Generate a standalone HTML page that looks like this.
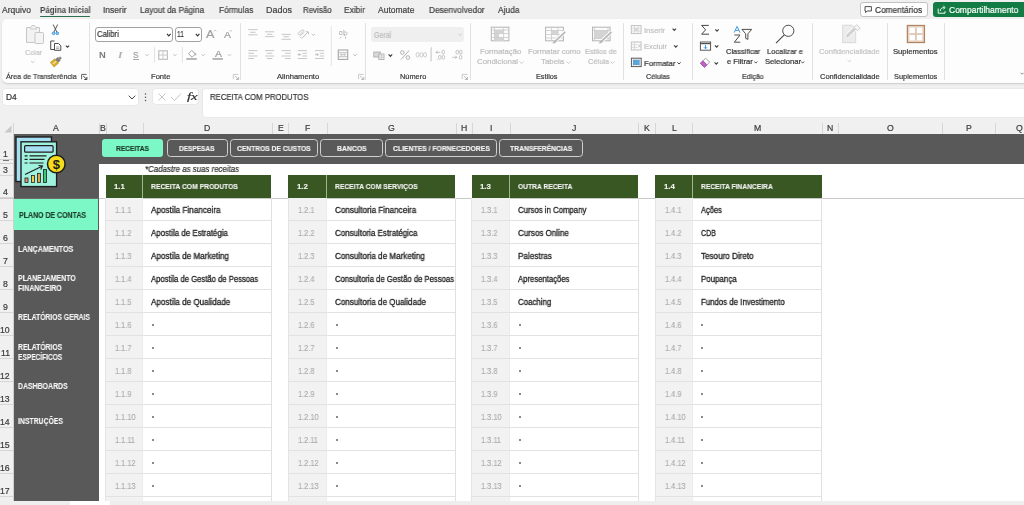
<!DOCTYPE html><html><head><meta charset='utf-8'><style>
html,body{margin:0;padding:0;}
body{width:1024px;height:505px;overflow:hidden;position:relative;background:#f0f0f0;font-family:"Liberation Sans", sans-serif;}
.a{position:absolute;box-sizing:border-box;}
.t{position:absolute;white-space:nowrap;line-height:1;transform-origin:0 0;-webkit-text-stroke:0.2px currentColor;will-change:transform;}
.t[style*='bold']{-webkit-text-stroke:0;}

#t0{transform:scaleX(1.0018)}
#t1{transform:scaleX(1.0024)}
#t2{transform:scaleX(0.9696)}
#t3{transform:scaleX(0.9667)}
#t4{transform:scaleX(1.0545)}
#t5{transform:scaleX(0.9321)}
#t6{transform:scaleX(0.9813)}
#t7{transform:scaleX(0.9997)}
#t8{transform:scaleX(0.9800)}
#t9{transform:scaleX(0.9872)}
#t10{transform:scaleX(0.9320)}
#t11{transform:scaleX(0.9767)}
#t12{transform:scaleX(0.9975)}
#t13{transform:scaleX(0.9830)}
#t14{transform:scaleX(1.0394)}
#t15{transform:scaleX(1.0402)}
#t16{transform:scaleX(1.0130)}
#t17{transform:scaleX(0.9992)}
#t18{transform:scaleX(0.9764)}
#t19{transform:scaleX(0.9711)}
#t20{transform:scaleX(1.0273)}
#t21{transform:scaleX(1.0164)}
#t22{transform:scaleX(0.9460)}
#t23{transform:scaleX(0.9055)}
#t24{transform:scaleX(0.7977)}
#t25{transform:scaleX(1.1259)}
#t26{transform:scaleX(1.1519)}
#t27{transform:scaleX(1.0381)}
#t28{transform:scaleX(1.4035)}
#t29{transform:scaleX(0.9512)}
#t30{transform:scaleX(1.1797)}
#t31{transform:scaleX(0.8202)}
#t32{transform:scaleX(1.0195)}
#t33{transform:scaleX(1.0363)}
#t34{transform:scaleX(1.0221)}
#t35{transform:scaleX(1.0329)}
#t36{transform:scaleX(0.9682)}
#t37{transform:scaleX(0.9798)}
#t38{transform:scaleX(0.9951)}
#t39{transform:scaleX(1.0095)}
#t40{transform:scaleX(0.9713)}
#t41{transform:scaleX(0.9855)}
#t42{transform:scaleX(1.0112)}
#t43{transform:scaleX(0.9799)}
#t44{transform:scaleX(1.0062)}
#t45{transform:scaleX(1.0072)}
#t46{transform:scaleX(1.0064)}
#t47{transform:scaleX(0.9953)}
#t48{transform:scaleX(1.5575)}
#t49{transform:scaleX(0.9222)}
#t50{left:53.43px !important}
#t51{left:99.68px !important}
#t52{left:121.31px !important}
#t53{left:204.46px !important}
#t54{left:277.65px !important}
#t55{left:305.19px !important}
#t56{left:388.02px !important}
#t57{left:460.76px !important}
#t58{left:489.74px !important}
#t59{left:572.23px !important}
#t60{left:644.40px !important}
#t61{left:671.78px !important}
#t62{left:753.82px !important}
#t63{left:827.41px !important}
#t64{left:887.12px !important}
#t65{left:965.70px !important}
#t66{left:1015.82px !important}
#t67{left:2.78px !important}
#t68{left:2.78px !important}
#t69{left:2.78px !important}
#t70{left:2.78px !important}
#t71{left:2.78px !important}
#t72{left:2.78px !important}
#t73{left:2.78px !important}
#t74{left:2.78px !important}
#t75{left:0.36px !important}
#t76{left:0.68px !important}
#t77{left:0.36px !important}
#t78{left:0.36px !important}
#t79{left:0.36px !important}
#t80{left:0.36px !important}
#t81{left:0.36px !important}
#t82{left:0.36px !important}
#t83{transform:scaleX(0.8538)}
#t84{transform:scaleX(0.8700)}
#t85{transform:scaleX(0.8539)}
#t86{transform:scaleX(0.8569)}
#t87{transform:scaleX(0.8295)}
#t88{transform:scaleX(0.8336)}
#t89{transform:scaleX(0.8032)}
#t90{transform:scaleX(0.8461)}
#t91{transform:scaleX(0.8372)}
#t92{transform:scaleX(0.9593)}
#t93{transform:scaleX(0.9438)}
#t94{transform:scaleX(0.9742)}
#t95{transform:scaleX(0.9890)}
#t96{transform:scaleX(0.9881)}
#t97{transform:scaleX(0.9792)}
#t98{transform:scaleX(0.9267)}
#t99{transform:scaleX(1.0470)}
#t100{transform:scaleX(0.9045)}
#t101{transform:scaleX(0.9000)}
#t102{transform:scaleX(0.9516)}
#t103{transform:scaleX(0.9000)}
#t104{transform:scaleX(0.9201)}
#t105{transform:scaleX(0.9000)}
#t106{transform:scaleX(0.9444)}
#t107{transform:scaleX(0.9000)}
#t108{transform:scaleX(0.8940)}
#t109{transform:scaleX(0.9000)}
#t110{transform:scaleX(0.9424)}
#t111{transform:scaleX(0.9000)}
#t112{transform:scaleX(0.9000)}
#t113{transform:scaleX(0.9000)}
#t114{transform:scaleX(0.9000)}
#t115{transform:scaleX(0.9000)}
#t116{transform:scaleX(0.9000)}
#t117{transform:scaleX(0.9000)}
#t118{transform:scaleX(0.9000)}
#t119{transform:scaleX(1.0470)}
#t120{transform:scaleX(0.8962)}
#t121{transform:scaleX(0.9000)}
#t122{transform:scaleX(0.9449)}
#t123{transform:scaleX(0.9000)}
#t124{transform:scaleX(0.9277)}
#t125{transform:scaleX(0.9000)}
#t126{transform:scaleX(0.9403)}
#t127{transform:scaleX(0.9000)}
#t128{transform:scaleX(0.8961)}
#t129{transform:scaleX(0.9000)}
#t130{transform:scaleX(0.9377)}
#t131{transform:scaleX(0.9000)}
#t132{transform:scaleX(0.9000)}
#t133{transform:scaleX(0.9000)}
#t134{transform:scaleX(0.9000)}
#t135{transform:scaleX(0.9000)}
#t136{transform:scaleX(0.9000)}
#t137{transform:scaleX(0.9000)}
#t138{transform:scaleX(0.9000)}
#t139{transform:scaleX(1.0470)}
#t140{transform:scaleX(0.8922)}
#t141{transform:scaleX(0.9000)}
#t142{transform:scaleX(0.9053)}
#t143{transform:scaleX(0.9000)}
#t144{transform:scaleX(0.9318)}
#t145{transform:scaleX(0.9000)}
#t146{transform:scaleX(0.9448)}
#t147{transform:scaleX(0.9000)}
#t148{transform:scaleX(0.8969)}
#t149{transform:scaleX(0.9000)}
#t150{transform:scaleX(0.9179)}
#t151{transform:scaleX(0.9000)}
#t152{transform:scaleX(0.9000)}
#t153{transform:scaleX(0.9000)}
#t154{transform:scaleX(0.9000)}
#t155{transform:scaleX(0.9000)}
#t156{transform:scaleX(0.9000)}
#t157{transform:scaleX(0.9000)}
#t158{transform:scaleX(0.9000)}
#t159{transform:scaleX(1.0470)}
#t160{transform:scaleX(0.8926)}
#t161{transform:scaleX(0.9000)}
#t162{transform:scaleX(0.8749)}
#t163{transform:scaleX(0.9000)}
#t164{transform:scaleX(0.8129)}
#t165{transform:scaleX(0.9000)}
#t166{transform:scaleX(0.9402)}
#t167{transform:scaleX(0.9000)}
#t168{transform:scaleX(0.9203)}
#t169{transform:scaleX(0.9000)}
#t170{transform:scaleX(0.9127)}
#t171{transform:scaleX(0.9000)}
#t172{transform:scaleX(0.9000)}
#t173{transform:scaleX(0.9000)}
#t174{transform:scaleX(0.9000)}
#t175{transform:scaleX(0.9000)}
#t176{transform:scaleX(0.9000)}
#t177{transform:scaleX(0.9000)}
#t178{transform:scaleX(0.9000)}</style></head><body>
<span id="t0" class="t" style="left:2.00px;top:6px;font-size:8.50px;color:#424242;font-weight:normal;">Arquivo</span>
<span id="t1" class="t" style="left:102.70px;top:6px;font-size:8.50px;color:#424242;font-weight:normal;">Inserir</span>
<span id="t2" class="t" style="left:139.80px;top:6px;font-size:8.50px;color:#424242;font-weight:normal;">Layout da Página</span>
<span id="t3" class="t" style="left:218.50px;top:6px;font-size:8.50px;color:#424242;font-weight:normal;">Fórmulas</span>
<span id="t4" class="t" style="left:265.80px;top:6px;font-size:8.50px;color:#424242;font-weight:normal;">Dados</span>
<span id="t5" class="t" style="left:302.50px;top:6px;font-size:8.50px;color:#424242;font-weight:normal;">Revisão</span>
<span id="t6" class="t" style="left:344.00px;top:6px;font-size:8.50px;color:#424242;font-weight:normal;">Exibir</span>
<span id="t7" class="t" style="left:378.10px;top:6px;font-size:8.50px;color:#424242;font-weight:normal;">Automate</span>
<span id="t8" class="t" style="left:429.00px;top:6px;font-size:8.50px;color:#424242;font-weight:normal;">Desenvolvedor</span>
<span id="t9" class="t" style="left:498.00px;top:6px;font-size:8.50px;color:#424242;font-weight:normal;">Ajuda</span>
<span id="t10" class="t" style="left:40.00px;top:6px;font-size:8.50px;color:#454545;font-weight:bold;">Página Inicial</span>
<div class="a" style="left:39.80px;top:16.20px;width:50.50px;height:1.30px;background:#2a6f4e;border-radius:1px;"></div>
<div class="a" style="left:859.60px;top:2.00px;width:68.00px;height:15.30px;background:#fff;border:1px solid #c2c2c2;border-radius:3px;"></div>
<svg class="a" style="left:856px;top:0px" width="100" height="20" viewBox="856 0 100 20"><path d="M865 6.6h6.4v4.4h-4.2l-1.6 1.6v-1.6h-.6z" fill="none" stroke="#444" stroke-width="0.95"/></svg>
<span id="t11" class="t" style="left:875.00px;top:6px;font-size:8.50px;color:#333;font-weight:normal;">Comentários</span>
<div class="a" style="left:933.20px;top:2.00px;width:100.00px;height:15.30px;background:#137b44;border-radius:3px;"></div>
<svg class="a" style="left:930px;top:0px" width="20" height="20" viewBox="930 0 20 20"><path d="M938.2 8.6v4.6h6.8v-2" fill="none" stroke="#fff" stroke-width="0.95"/><path d="M940.2 11c.2-2.4 1.8-3.4 4-3.4M943.4 6l1.8 1.6-1.8 1.6" fill="none" stroke="#fff" stroke-width="0.95"/></svg>
<span id="t12" class="t" style="left:948.60px;top:6px;font-size:8.50px;color:#fff;font-weight:normal;">Compartilhamento</span>
<div class="a" style="left:2.00px;top:19.00px;width:1040.00px;height:64.00px;background:#fdfdfd;border-radius:5px;box-shadow:0 1px 1.5px rgba(0,0,0,0.16);"></div>
<div class="a" style="left:88.70px;top:23.00px;width:1.00px;height:57.00px;background:#e1e1e1;"></div>
<div class="a" style="left:239.60px;top:23.00px;width:1.00px;height:57.00px;background:#e1e1e1;"></div>
<div class="a" style="left:365.30px;top:23.00px;width:1.00px;height:57.00px;background:#e1e1e1;"></div>
<div class="a" style="left:469.60px;top:23.00px;width:1.00px;height:57.00px;background:#e1e1e1;"></div>
<div class="a" style="left:622.80px;top:23.00px;width:1.00px;height:57.00px;background:#e1e1e1;"></div>
<div class="a" style="left:692.00px;top:23.00px;width:1.00px;height:57.00px;background:#e1e1e1;"></div>
<div class="a" style="left:812.20px;top:23.00px;width:1.00px;height:57.00px;background:#e1e1e1;"></div>
<div class="a" style="left:887.20px;top:23.00px;width:1.00px;height:57.00px;background:#e1e1e1;"></div>
<div class="a" style="left:944.20px;top:23.00px;width:1.00px;height:57.00px;background:#e1e1e1;"></div>
<div class="a" style="left:431.00px;top:47.00px;width:1.00px;height:14.00px;background:#dadada;"></div>
<span id="t13" class="t" style="left:6.20px;top:73px;font-size:7.30px;color:#3a3a3a;font-weight:normal;">Área de Transferência</span>
<span id="t14" class="t" style="left:150.50px;top:73px;font-size:7.30px;color:#3a3a3a;font-weight:normal;">Fonte</span>
<span id="t15" class="t" style="left:276.80px;top:73px;font-size:7.30px;color:#3a3a3a;font-weight:normal;">Alinhamento</span>
<span id="t16" class="t" style="left:399.50px;top:73px;font-size:7.30px;color:#3a3a3a;font-weight:normal;">Número</span>
<span id="t17" class="t" style="left:536.00px;top:73px;font-size:7.30px;color:#3a3a3a;font-weight:normal;">Estilos</span>
<span id="t18" class="t" style="left:645.80px;top:73px;font-size:7.30px;color:#3a3a3a;font-weight:normal;">Células</span>
<span id="t19" class="t" style="left:741.90px;top:73px;font-size:7.30px;color:#3a3a3a;font-weight:normal;">Edição</span>
<span id="t20" class="t" style="left:820.00px;top:73px;font-size:7.30px;color:#3a3a3a;font-weight:normal;">Confidencialidade</span>
<span id="t21" class="t" style="left:894.30px;top:73px;font-size:7.30px;color:#3a3a3a;font-weight:normal;">Suplementos</span>
<svg class="a" style="left:0px;top:68px" width="480" height="16" viewBox="0 68 480 16"><path d="M81.6 79.2v-4.8h5" fill="none" stroke="#606060" stroke-width="1"/><path d="M83.2 76l3.6 3.4M84.3 79.5h2.6v-2.6" fill="none" stroke="#444" stroke-width="1"/><path d="M233.3 79.2v-4.8h5" fill="none" stroke="#c4c4c4" stroke-width="0.9"/><path d="M234.9 76l3.6 3.4M236.0 79.5h2.6v-2.6" fill="none" stroke="#b0b0b0" stroke-width="0.9"/><path d="M358.6 79.2v-4.8h5" fill="none" stroke="#c4c4c4" stroke-width="0.9"/><path d="M360.20000000000005 76l3.6 3.4M361.3 79.5h2.6v-2.6" fill="none" stroke="#b0b0b0" stroke-width="0.9"/><path d="M462.2 79.2v-4.8h5" fill="none" stroke="#c4c4c4" stroke-width="0.9"/><path d="M463.8 76l3.6 3.4M464.9 79.5h2.6v-2.6" fill="none" stroke="#b0b0b0" stroke-width="0.9"/></svg>
<svg class="a" style="left:20px;top:20px" width="60" height="50" viewBox="20 20 60 50">
<path d="M26.5 27.5h4l1.5-2h2.5l1.5 2h3.5v15h-13z" fill="#f2f2f2" stroke="#c6c6c6" stroke-width="1"/>
<path d="M30.5 27.5v1.5h6v-1.5" fill="none" stroke="#c6c6c6" stroke-width="0.9"/>
<rect x="35" y="32.5" width="8.5" height="11" rx="0.8" fill="#f4f4f4" stroke="#c6c6c6" stroke-width="1"/>
<path d="M31 61l1.7 1.5 1.7-1.5" fill="none" stroke="#c2c2c2" stroke-width="0.9"/>
<path d="M53.2 24.5l3.6 7.5M57.6 24.5l-3.6 7.5" stroke="#4a4a4a" stroke-width="0.9"/>
<circle cx="53.6" cy="33.3" r="1.3" fill="#9cc9ee" stroke="#3a96dd" stroke-width="1"/>
<circle cx="57.3" cy="33.3" r="1.3" fill="#9cc9ee" stroke="#3a96dd" stroke-width="1"/>
<path d="M54.5 41h-3.8v8.5h3.8" fill="none" stroke="#444" stroke-width="0.95"/>
<path d="M54.5 43.5h4l2.3 2.3v4.5h-6.3z" fill="#fff" stroke="#444" stroke-width="0.95"/>
<path d="M56 47h3.2M56 48.6h3.2" stroke="#999" stroke-width="0.8"/>
<path d="M65.8 45.6l1.7 1.6 1.7-1.6" fill="none" stroke="#444" stroke-width="1.1"/>
<g transform="rotate(-40 56 61.5)"><rect x="56.6" y="59.3" width="3.8" height="4.4" rx="0.6" fill="#808080"/><rect x="60" y="60.2" width="2.6" height="2.6" rx="0.6" fill="#8c8c8c"/>
<path d="M51 58.6h5.8v5.8h-5.8z" fill="#dcae2a" stroke="#a88420" stroke-width="0.5"/><path d="M51.8 61.5h4.6" stroke="#f6e6b8" stroke-width="1.1"/></g>
</svg>
<span id="t22" class="t" style="left:25.00px;top:49px;font-size:7.60px;color:#c4c4c4;font-weight:normal;">Colar</span>
<div class="a" style="left:94.60px;top:27.00px;width:78.10px;height:15.20px;background:#fff;border:1px solid #a2a2a2;border-radius:3px;"></div>
<span id="t23" class="t" style="left:96.80px;top:30px;font-size:8.50px;color:#333;font-weight:normal;">Calibri</span>
<div class="a" style="left:174.70px;top:27.00px;width:26.90px;height:15.20px;background:#fff;border:1px solid #a2a2a2;border-radius:3px;"></div>
<span id="t24" class="t" style="left:176.80px;top:30px;font-size:8.50px;color:#333;font-weight:normal;">11</span>
<svg class="a" style="left:88px;top:20px" width="160" height="50" viewBox="88 20 160 50"><path d="M167.00 33.95L168.80 35.85L170.60 33.95" fill="none" stroke="#333" stroke-width="1.15"/><path d="M195.80 33.95L197.60 35.85L199.40 33.95" fill="none" stroke="#333" stroke-width="1.15"/><path d="M214 31.3l1.1-1.2 1.1 1.2" fill="none" stroke="#a8a8a8" stroke-width="0.7"/><path d="M229.6 30.2l1.1 1.2 1.1-1.2" fill="none" stroke="#a8a8a8" stroke-width="0.7"/><path d="M154.5 47.2v15.3M182.4 47.2v15.3" stroke="#dedede" stroke-width="0.9"/><path d="M145.40 54.20L147.00 55.80L148.60 54.20" fill="none" stroke="#b8b8b8" stroke-width="0.9"/><path d="M173.30 54.20L174.90 55.80L176.50 54.20" fill="none" stroke="#b8b8b8" stroke-width="0.9"/><path d="M201.60 54.20L203.20 55.80L204.80 54.20" fill="none" stroke="#b8b8b8" stroke-width="0.9"/><path d="M227.90 54.20L229.50 55.80L231.10 54.20" fill="none" stroke="#b8b8b8" stroke-width="0.9"/><rect x="158.8" y="50.8" width="8.5" height="8.5" fill="none" stroke="#b4b4b4" stroke-width="1"/><path d="M163 50.8v8.5M158.8 55h8.5" stroke="#c4c4c4" stroke-width="0.9"/><path d="M188.5 53.8l3.2-3.4 3.6 3.6-3.2 3.2z" fill="#fff" stroke="#9a9a9a" stroke-width="0.9"/><path d="M194.8 52.5c1 .8 1.2 2 .9 3" fill="none" stroke="#9a9a9a" stroke-width="0.8"/><rect x="186.3" y="58" width="10.5" height="1.9" fill="#b4b4b4"/><rect x="212.5" y="58" width="10.4" height="1.9" fill="#b4b4b4"/></svg>
<span id="t25" class="t" style="left:205.90px;top:29px;font-size:11.20px;color:#a0a0a0;font-weight:normal;">A</span>
<span id="t26" class="t" style="left:223.80px;top:31px;font-size:9.00px;color:#a0a0a0;font-weight:normal;">A</span>
<span id="t27" class="t" style="left:99.00px;top:51px;font-size:9.00px;color:#7a7a7a;font-weight:bold;">N</span>
<span id="t28" class="t" style="left:118.30px;top:51px;font-size:9.00px;color:#a8a8a8;font-weight:normal;font-style:italic;font-family:'Liberation Serif';">I</span>
<span id="t29" class="t" style="left:133.40px;top:51px;font-size:8.60px;color:#a0a0a0;font-weight:normal;">S</span>
<div class="a" style="left:132.80px;top:58.60px;width:5.80px;height:0.90px;background:#a8a8a8;"></div>
<span id="t30" class="t" style="left:214.60px;top:50px;font-size:8.80px;color:#9a9a9a;font-weight:normal;">A</span>
<svg class="a" style="left:240px;top:20px" width="130" height="50" viewBox="240 20 130 50"><path d="M248.30 29.60H257.50" stroke="#bdbdbd" stroke-width="0.85"/><path d="M250.20 32.30H255.60" stroke="#bdbdbd" stroke-width="0.85"/><path d="M248.30 34.80H257.50" stroke="#bdbdbd" stroke-width="0.85"/><path d="M265.00 31.80H274.20" stroke="#bdbdbd" stroke-width="0.85"/><path d="M266.90 34.30H272.30" stroke="#bdbdbd" stroke-width="0.85"/><path d="M265.00 36.60H274.20" stroke="#bdbdbd" stroke-width="0.85"/><path d="M281.60 34.40H290.80" stroke="#bdbdbd" stroke-width="0.85"/><path d="M283.50 36.70H288.90" stroke="#bdbdbd" stroke-width="0.85"/><path d="M281.60 39.30H290.80" stroke="#bdbdbd" stroke-width="0.85"/><path d="M248.30 50.60H257.50" stroke="#bdbdbd" stroke-width="0.85"/><path d="M248.30 53.30H254.00" stroke="#bdbdbd" stroke-width="0.85"/><path d="M248.30 56.00H257.50" stroke="#bdbdbd" stroke-width="0.85"/><path d="M248.30 58.50H254.00" stroke="#bdbdbd" stroke-width="0.85"/><path d="M265.00 50.60H274.20" stroke="#bdbdbd" stroke-width="0.85"/><path d="M266.80 53.30H272.40" stroke="#bdbdbd" stroke-width="0.85"/><path d="M265.00 56.00H274.20" stroke="#bdbdbd" stroke-width="0.85"/><path d="M266.80 58.50H272.40" stroke="#bdbdbd" stroke-width="0.85"/><path d="M281.60 50.60H290.80" stroke="#bdbdbd" stroke-width="0.85"/><path d="M285.10 53.30H290.80" stroke="#bdbdbd" stroke-width="0.85"/><path d="M281.60 56.00H290.80" stroke="#bdbdbd" stroke-width="0.85"/><path d="M285.10 58.50H290.80" stroke="#bdbdbd" stroke-width="0.85"/><path d="M297.80 50.60H307.00" stroke="#bdbdbd" stroke-width="0.85"/><path d="M302.50 53.30H307.00" stroke="#bdbdbd" stroke-width="0.85"/><path d="M302.50 56.00H307.00" stroke="#bdbdbd" stroke-width="0.85"/><path d="M297.80 58.50H307.00" stroke="#bdbdbd" stroke-width="0.85"/><path d="M301.3 54.6h-3M299.6 53.2l-1.4 1.4 1.4 1.4" fill="none" stroke="#b0b0b0" stroke-width="0.8"/><path d="M315.00 50.60H324.20" stroke="#bdbdbd" stroke-width="0.85"/><path d="M319.70 53.30H324.20" stroke="#bdbdbd" stroke-width="0.85"/><path d="M319.70 56.00H324.20" stroke="#bdbdbd" stroke-width="0.85"/><path d="M315.00 58.50H324.20" stroke="#bdbdbd" stroke-width="0.85"/><path d="M315 54.6h3.2M316.8 53.2l1.4 1.4-1.4 1.4" fill="none" stroke="#b0b0b0" stroke-width="0.8"/><path d="M301.5 38.6L308 32.1M306 31.6l2.3.3.2 2.3" fill="none" stroke="#b4b4b4" stroke-width="0.85"/><path d="M298 33.5l3.5-3.5 1.5 1.5-3.5 3.5zM300.5 35.8l3.5-3.5" fill="none" stroke="#b8b8b8" stroke-width="0.85"/><path d="M302.5 29.2l2.2 2.2M299.5 36.5l1.5 1.5" fill="none" stroke="#c0c0c0" stroke-width="0.8"/><path d="M311.70 33.75L313.40 35.45L315.10 33.75" fill="none" stroke="#b8b8b8" stroke-width="0.9"/><path d="M331.3 26v40" stroke="#e2e2e2" stroke-width="0.9"/><path d="M339.5 31.5h2.5v3h-2.5zM339.8 38.5l1.8-2M343.8 29.8v4.5M343.8 32h2.2c1.5 0 1.8 2.8 0 2.8h-2.5M345 33.6l-1.3 1.2 1.3 1.2M345.5 36.5v2.5" fill="none" stroke="#b8b8b8" stroke-width="0.85"/><rect x="338.3" y="50" width="9.4" height="9.4" fill="none" stroke="#a6a6a6" stroke-width="1.1"/><path d="M338.3 52.7h9.4M338.3 56.7h9.4M340.5 54.7h5M340.5 54.7l1-1M340.5 54.7l1 1M345.5 54.7l-1-1M345.5 54.7l-1 1" fill="none" stroke="#b0b0b0" stroke-width="0.8"/><path d="M353.20 54.15L355.00 55.85L356.80 54.15" fill="none" stroke="#b8b8b8" stroke-width="0.9"/></svg>
<div class="a" style="left:371.40px;top:27.00px;width:92.80px;height:14.80px;background:#efefef;border-radius:3px;"></div>
<span id="t31" class="t" style="left:373.50px;top:31px;font-size:8.50px;color:#bcbcbc;font-weight:normal;">Geral</span>
<svg class="a" style="left:368px;top:20px" width="100" height="50" viewBox="368 20 100 50"><path d="M458.60 33.80L460.20 35.40L461.80 33.80" fill="none" stroke="#c4c4c4" stroke-width="0.9"/><rect x="373.8" y="52" width="6.5" height="5" fill="#d8d8d8" stroke="#a8a8a8" stroke-width="0.8"/><rect x="378.8" y="54" width="5.2" height="5.6" fill="#fafafa" stroke="#a8a8a8" stroke-width="0.8"/><path d="M378.8 55.9h5.2M378.8 57.7h5.2M381.4 54v5.6" stroke="#b8b8b8" stroke-width="0.6"/><path d="M388.60 54.45L390.40 56.35L392.20 54.45" fill="none" stroke="#444" stroke-width="1.2"/><circle cx="402.3" cy="52.5" r="1.8" fill="none" stroke="#a6a6a6" stroke-width="0.9"/><circle cx="407.9" cy="57.5" r="1.8" fill="none" stroke="#a6a6a6" stroke-width="0.9"/><path d="M409.2 50.4L401 59.6" stroke="#a6a6a6" stroke-width="0.9"/><ellipse cx="417.6" cy="54.8" rx="1.5" ry="2.3" fill="none" stroke="#bdbdbd" stroke-width="0.75"/><ellipse cx="421.3" cy="54.8" rx="1.5" ry="2.3" fill="none" stroke="#bdbdbd" stroke-width="0.75"/><ellipse cx="425" cy="54.8" rx="1.5" ry="2.3" fill="none" stroke="#bdbdbd" stroke-width="0.75"/><path d="M430.6 48v14" stroke="#dedede" stroke-width="0.9"/><path d="M436 52.3h4.3M437.5 50.8l-1.5 1.5 1.5 1.5" fill="none" stroke="#b4b4b4" stroke-width="0.8"/><ellipse cx="443.2" cy="52.2" rx="1.3" ry="2" fill="none" stroke="#b4b4b4" stroke-width="0.75"/><ellipse cx="439.8" cy="57.3" rx="1.3" ry="2" fill="none" stroke="#b4b4b4" stroke-width="0.75"/><ellipse cx="443.4" cy="57.3" rx="1.3" ry="2" fill="none" stroke="#b4b4b4" stroke-width="0.75"/><path d="M437.3 59v.8" stroke="#b4b4b4" stroke-width="0.8"/><ellipse cx="457.2" cy="52.2" rx="1.3" ry="2" fill="none" stroke="#b4b4b4" stroke-width="0.75"/><ellipse cx="460.8" cy="52.2" rx="1.3" ry="2" fill="none" stroke="#b4b4b4" stroke-width="0.75"/><path d="M452.3 57.3h4.5M455.3 55.8l1.5 1.5-1.5 1.5" fill="none" stroke="#b4b4b4" stroke-width="0.8"/><ellipse cx="460.6" cy="57.3" rx="1.3" ry="2" fill="none" stroke="#b4b4b4" stroke-width="0.75"/></svg>
<svg class="a" style="left:486px;top:22px" width="130" height="26" viewBox="486 22 130 26"><rect x="491.3" y="27.2" width="17.6" height="13.6" fill="#fbfbfb" stroke="#b4b4b4" stroke-width="1"/><rect x="494.5" y="30" width="9" height="3.5" fill="#d4d4d4"/><rect x="494.5" y="33.5" width="4.5" height="4" fill="#d4d4d4"/><rect x="494.5" y="37.5" width="9" height="3.3" fill="#d4d4d4"/><path d="M494.5 27.2v13.6M503.6 27.2v13.6M491.3 30h17.6M491.3 33.5h17.6M491.3 37.5h17.6" stroke="#cacaca" stroke-width="0.8"/><rect x="545.6" y="27.2" width="17.8" height="13.6" fill="#fbfbfb" stroke="#b4b4b4" stroke-width="1"/><rect x="551.5" y="30.5" width="6.5" height="4" fill="#d4d4d4"/><path d="M551.5 27.2v13.6M558 27.2v13.6M545.6 30.5h17.8M545.6 34.5h17.8M545.6 38h17.8" stroke="#cacaca" stroke-width="0.8"/><path d="M565.2 31.8l-9.5 9" stroke="#fff" stroke-width="3.4"/><path d="M565.2 31.8l-9.5 9" stroke="#b8b8b8" stroke-width="1.8"/><path d="M555.8 40.6c-1.2 .2-2.5 1.4-3.6 2.6 1.8 .2 3.6-.4 4.4-1.8z" fill="#b0b0b0"/><rect x="592.5" y="27.2" width="17.6" height="13.6" fill="#fbfbfb" stroke="#b4b4b4" stroke-width="1"/><rect x="594.6" y="30.5" width="13.4" height="8" fill="#d4d4d4"/><path d="M594.6 27.2v13.6M608 27.2v13.6M592.5 30.5h17.6M592.5 38.5h17.6" stroke="#cacaca" stroke-width="0.8"/><path d="M611.5 31.8l-9.5 9" stroke="#fff" stroke-width="3.4"/><path d="M611.5 31.8l-9.5 9" stroke="#b8b8b8" stroke-width="1.8"/><path d="M602.1 40.6c-1.2 .2-2.5 1.4-3.6 2.6 1.8 .2 3.6-.4 4.4-1.8z" fill="#b0b0b0"/></svg>
<span id="t32" class="t" style="left:479.80px;top:48px;font-size:7.60px;color:#bdbdbd;font-weight:normal;">Formatação</span>
<span id="t33" class="t" style="left:476.70px;top:58px;font-size:7.60px;color:#bdbdbd;font-weight:normal;">Condicional</span>
<span id="t34" class="t" style="left:528.30px;top:48px;font-size:7.60px;color:#bdbdbd;font-weight:normal;">Formatar como</span>
<span id="t35" class="t" style="left:541.00px;top:58px;font-size:7.60px;color:#bdbdbd;font-weight:normal;">Tabela</span>
<span id="t36" class="t" style="left:585.30px;top:48px;font-size:7.60px;color:#bdbdbd;font-weight:normal;">Estilos de</span>
<span id="t37" class="t" style="left:587.50px;top:58px;font-size:7.60px;color:#bdbdbd;font-weight:normal;">Célula</span>
<svg class="a" style="left:518.5px;top:60.5px;" width="5" height="4" viewBox="0 0 5 4"><path d="M.5 .5l2 2 2-2" fill="none" stroke="#c0c0c0" stroke-width="0.8"/></svg>
<svg class="a" style="left:565.5px;top:60.5px;" width="5" height="4" viewBox="0 0 5 4"><path d="M.5 .5l2 2 2-2" fill="none" stroke="#c0c0c0" stroke-width="0.8"/></svg>
<svg class="a" style="left:610px;top:60.5px;" width="5" height="4" viewBox="0 0 5 4"><path d="M.5 .5l2 2 2-2" fill="none" stroke="#c0c0c0" stroke-width="0.8"/></svg>
<svg class="a" style="left:626px;top:22px" width="60" height="48" viewBox="626 22 60 48"><rect x="631.3" y="25.6" width="9.8" height="8" fill="#fafafa" stroke="#bdbdbd" stroke-width="0.9"/><path d="M631.3 28.3h9.8M631.3 31h9.8M634.5 25.6v8M638 25.6v8" stroke="#cfcfcf" stroke-width="0.7"/><rect x="634.5" y="28.3" width="3.5" height="2.7" fill="#d6d6d6"/><path d="M672.60 28.70L674.30 30.50L676.00 28.70" fill="none" stroke="#444" stroke-width="1.15"/><rect x="631.3" y="42" width="9.8" height="8" fill="#fafafa" stroke="#bdbdbd" stroke-width="0.9"/><path d="M631.3 44.7h6M631.3 47.4h6M634.5 42v8" stroke="#cfcfcf" stroke-width="0.7"/><path d="M638.2 44.6l2.6 2.6M640.8 44.6l-2.6 2.6" stroke="#b8b8b8" stroke-width="0.8"/><path d="M674.10 45.40L675.80 47.20L677.50 45.40" fill="none" stroke="#444" stroke-width="1.15"/><rect x="631.4" y="58.2" width="9.8" height="8.4" fill="#fff" stroke="#505050" stroke-width="0.95"/><rect x="633" y="59.8" width="6.6" height="5.2" fill="#58a6e0"/><path d="M633 58.2v8.4M639.6 58.2v8.4M631.4 59.8h9.8M631.4 65h9.8" stroke="#8a8a8a" stroke-width="0.5" stroke-dasharray="0.8 0.8"/><path d="M677.40 62.35L679.00 64.05L680.60 62.35" fill="none" stroke="#444" stroke-width="1.0"/></svg>
<span id="t38" class="t" style="left:643.60px;top:27px;font-size:7.60px;color:#c0c0c0;font-weight:normal;">Inserir</span>
<span id="t39" class="t" style="left:643.60px;top:43px;font-size:7.60px;color:#c0c0c0;font-weight:normal;">Excluir</span>
<span id="t40" class="t" style="left:643.60px;top:60px;font-size:8.00px;color:#333;font-weight:normal;">Formatar</span>
<svg class="a" style="left:694px;top:20px" width="120" height="50" viewBox="694 20 120 50"><path d="M708.8 25.4h-7.2l4 4.4-4 4.4h7.4" fill="none" stroke="#444" stroke-width="1"/><path d="M715.30 29.30L717.00 31.10L718.70 29.30" fill="none" stroke="#444" stroke-width="1.15"/><rect x="700.4" y="42" width="10.2" height="8.2" fill="#fff" stroke="#505050" stroke-width="0.95"/><path d="M700.4 43.6h10.2" stroke="#505050" stroke-width="1.2"/><path d="M705.5 45v3.6M703.9 47.2l1.6 1.6 1.6-1.6" fill="none" stroke="#3a96dd" stroke-width="0.95"/><path d="M714.90 45.30L716.60 47.10L718.30 45.30" fill="none" stroke="#444" stroke-width="1.15"/><path d="M700.4 63.3l5.3-5.1 4 4-5.2 5.1z" fill="#fff" stroke="#8a8a8a" stroke-width="0.8"/><path d="M700.4 63.3l2.6-2.5 4 4-2.5 2.4z" fill="#c061c8" stroke="#a04aa8" stroke-width="0.8"/><path d="M714.60 62.40L716.30 64.20L718.00 62.40" fill="none" stroke="#444" stroke-width="1.15"/><path d="M734.2 32.6l2.9-6.2 2.9 6.2M735.3 30.4h3.6" fill="none" stroke="#3a96dd" stroke-width="0.95"/><path d="M734.4 35h5.6l-5.6 7.2h5.8" fill="none" stroke="#444" stroke-width="0.95"/><path d="M741.9 29.4h9.8l-3.8 4.4v5.6l-2.2-1v-4.6z" fill="none" stroke="#444" stroke-width="0.95"/><path d="M754.30 61.50L755.80 63.10L757.30 61.50" fill="none" stroke="#444" stroke-width="0.95"/><circle cx="788.3" cy="30.8" r="5.6" fill="none" stroke="#444" stroke-width="0.95"/><path d="M784.3 34.8L776 43.2" stroke="#444" stroke-width="1.05"/><path d="M801.10 61.50L802.60 63.10L804.10 61.50" fill="none" stroke="#444" stroke-width="0.95"/></svg>
<span id="t41" class="t" style="left:726.20px;top:48px;font-size:7.50px;color:#333;font-weight:normal;">Classificar</span>
<span id="t42" class="t" style="left:726.90px;top:58px;font-size:7.50px;color:#333;font-weight:normal;">e Filtrar</span>
<span id="t43" class="t" style="left:766.90px;top:48px;font-size:7.60px;color:#333;font-weight:normal;">Localizar e</span>
<span id="t44" class="t" style="left:764.50px;top:58px;font-size:7.60px;color:#333;font-weight:normal;">Selecionar</span>
<svg class="a" style="left:836px;top:20px" width="188" height="60" viewBox="836 20 188 60"><path d="M842.6 25.2h9.5l3.6 3.6v13.9h-13.1z" fill="#ececec" stroke="#d6d6d6" stroke-width="0.9"/><path d="M846.8 36.6l8-8" stroke="#fff" stroke-width="4.6"/><path d="M846.8 36.6l8-8" stroke="#cfcfcf" stroke-width="3.2"/><path d="M847.6 34.4l2.2 2.2M849.2 32.8l2.2 2.2M850.8 31.2l2.2 2.2" stroke="#e8e8e8" stroke-width="0.6"/><path d="M854 27.2l2.6-2.6 3.6 3.6-2.6 2.6z" fill="#f4f4f4" stroke="#cfcfcf" stroke-width="1"/><path d="M847.80 60.30L849.40 61.90L851.00 60.30" fill="none" stroke="#c8c8c8" stroke-width="0.9"/><rect x="907.4" y="25.5" width="17" height="17" fill="#eadbcf" stroke="#b38462" stroke-width="1.3"/><rect x="909.6" y="27.7" width="5.3" height="5.3" fill="#fff"/><rect x="916.9" y="27.7" width="5.3" height="5.3" fill="#fff"/><rect x="909.6" y="35" width="5.3" height="5.3" fill="#fff"/><rect x="916.9" y="35" width="5.3" height="5.3" fill="#fff"/><path d="M915.9 27.7v12.6M909.6 34h12.6" stroke="#d8b89e" stroke-width="0.8"/><path d="M1020.70 72.75L1022.20 74.25L1023.70 72.75" fill="none" stroke="#777" stroke-width="0.9"/></svg>
<span id="t45" class="t" style="left:819.20px;top:48px;font-size:7.60px;color:#c4c4c4;font-weight:normal;">Confidencialidade</span>
<span id="t46" class="t" style="left:893.40px;top:48px;font-size:7.60px;color:#333;font-weight:normal;">Suplementos</span>
<div class="a" style="left:2.70px;top:89.00px;width:135.50px;height:15.50px;background:#fff;border-radius:3px;box-shadow:0 0 0 0.6px #e2e2e2;"></div>
<span id="t47" class="t" style="left:6.30px;top:93px;font-size:8.40px;color:#333;font-weight:normal;">D4</span>
<svg class="a" style="left:128px;top:95px;" width="8" height="5" viewBox="0 0 8 5"><path d="M.7 .7l3.3 3.3 3.3-3.3" fill="none" stroke="#444" stroke-width="1"/></svg>
<svg class="a" style="left:144px;top:92px;" width="3" height="11" viewBox="0 0 3 11"><circle cx="1.5" cy="2" r="0.75" fill="#555"/><circle cx="1.5" cy="5.3" r="0.75" fill="#555"/><circle cx="1.5" cy="8.6" r="0.75" fill="#555"/></svg>
<div class="a" style="left:153.00px;top:89.00px;width:45.00px;height:15.30px;background:#fff;border-radius:3px;box-shadow:0 0 0 0.6px #e2e2e2;"></div>
<svg class="a" style="left:157px;top:91.5px;" width="11" height="10" viewBox="0 0 11 10"><path d="M1.5 1.5l7 7M8.5 1.5l-7 7" stroke="#c0c0c0" stroke-width="0.9"/></svg>
<svg class="a" style="left:170px;top:91.5px;" width="12" height="10" viewBox="0 0 12 10"><path d="M1 5l3.5 3.5L11 1.5" fill="none" stroke="#c0c0c0" stroke-width="0.9"/></svg>
<span id="t48" class="t" style="left:186.50px;top:93px;font-size:9.50px;color:#333;font-weight:normal;font-style:italic;font-family:'Liberation Serif';">fx</span>
<div class="a" style="left:202.60px;top:89.00px;width:830.00px;height:28.20px;background:#fff;border-radius:3px;box-shadow:0 0 0 0.6px #e2e2e2;"></div>
<span id="t49" class="t" style="left:209.70px;top:93px;font-size:8.40px;color:#333;font-weight:normal;">RECEITA COM PRODUTOS</span>
<div class="a" style="left:0.00px;top:121.50px;width:1024.00px;height:12.10px;background:#f0f0f0;"></div>
<div class="a" style="left:0.00px;top:133.60px;width:1024.00px;height:0.90px;background:#c6c6c6;"></div>
<svg class="a" style="left:4px;top:124.5px;" width="8" height="8" viewBox="0 0 8 8"><path d="M7.5 .5v7h-7z" fill="#c8c8c8"/></svg>
<div class="a" style="left:13.10px;top:122.50px;width:0.80px;height:11.00px;background:#d6d6d6;"></div>
<span id="t50" class="t" style="left:0.00px;top:124px;font-size:8.70px;color:#3a3a3a;font-weight:normal;">A</span>
<div class="a" style="left:98.75px;top:122.50px;width:0.80px;height:11.00px;background:#d6d6d6;"></div>
<span id="t51" class="t" style="left:0.00px;top:124px;font-size:8.70px;color:#3a3a3a;font-weight:normal;">B</span>
<div class="a" style="left:105.60px;top:122.50px;width:0.80px;height:11.00px;background:#d6d6d6;"></div>
<span id="t52" class="t" style="left:0.00px;top:124px;font-size:8.70px;color:#3a3a3a;font-weight:normal;">C</span>
<div class="a" style="left:142.50px;top:122.50px;width:0.80px;height:11.00px;background:#d6d6d6;"></div>
<span id="t53" class="t" style="left:0.00px;top:124px;font-size:8.70px;color:#3a3a3a;font-weight:normal;">D</span>
<div class="a" style="left:271.90px;top:122.50px;width:0.80px;height:11.00px;background:#d6d6d6;"></div>
<span id="t54" class="t" style="left:0.00px;top:124px;font-size:8.70px;color:#3a3a3a;font-weight:normal;">E</span>
<div class="a" style="left:288.40px;top:122.50px;width:0.80px;height:11.00px;background:#d6d6d6;"></div>
<span id="t55" class="t" style="left:0.00px;top:124px;font-size:8.70px;color:#3a3a3a;font-weight:normal;">F</span>
<div class="a" style="left:326.50px;top:122.50px;width:0.80px;height:11.00px;background:#d6d6d6;"></div>
<span id="t56" class="t" style="left:0.00px;top:124px;font-size:8.70px;color:#3a3a3a;font-weight:normal;">G</span>
<div class="a" style="left:455.50px;top:122.50px;width:0.80px;height:11.00px;background:#d6d6d6;"></div>
<span id="t57" class="t" style="left:0.00px;top:124px;font-size:8.70px;color:#3a3a3a;font-weight:normal;">H</span>
<div class="a" style="left:471.50px;top:122.50px;width:0.80px;height:11.00px;background:#d6d6d6;"></div>
<span id="t58" class="t" style="left:0.00px;top:124px;font-size:8.70px;color:#3a3a3a;font-weight:normal;">I</span>
<div class="a" style="left:509.60px;top:122.50px;width:0.80px;height:11.00px;background:#d6d6d6;"></div>
<span id="t59" class="t" style="left:0.00px;top:124px;font-size:8.70px;color:#3a3a3a;font-weight:normal;">J</span>
<div class="a" style="left:638.40px;top:122.50px;width:0.80px;height:11.00px;background:#d6d6d6;"></div>
<span id="t60" class="t" style="left:0.00px;top:124px;font-size:8.70px;color:#3a3a3a;font-weight:normal;">K</span>
<div class="a" style="left:655.40px;top:122.50px;width:0.80px;height:11.00px;background:#d6d6d6;"></div>
<span id="t61" class="t" style="left:0.00px;top:124px;font-size:8.70px;color:#3a3a3a;font-weight:normal;">L</span>
<div class="a" style="left:692.20px;top:122.50px;width:0.80px;height:11.00px;background:#d6d6d6;"></div>
<span id="t62" class="t" style="left:0.00px;top:124px;font-size:8.70px;color:#3a3a3a;font-weight:normal;">M</span>
<div class="a" style="left:821.90px;top:122.50px;width:0.80px;height:11.00px;background:#d6d6d6;"></div>
<span id="t63" class="t" style="left:0.00px;top:124px;font-size:8.70px;color:#3a3a3a;font-weight:normal;">N</span>
<div class="a" style="left:838.40px;top:122.50px;width:0.80px;height:11.00px;background:#d6d6d6;"></div>
<span id="t64" class="t" style="left:0.00px;top:124px;font-size:8.70px;color:#3a3a3a;font-weight:normal;">O</span>
<div class="a" style="left:941.80px;top:122.50px;width:0.80px;height:11.00px;background:#d6d6d6;"></div>
<span id="t65" class="t" style="left:0.00px;top:124px;font-size:8.70px;color:#3a3a3a;font-weight:normal;">P</span>
<div class="a" style="left:994.60px;top:122.50px;width:0.80px;height:11.00px;background:#d6d6d6;"></div>
<span id="t66" class="t" style="left:0.00px;top:124px;font-size:8.70px;color:#3a3a3a;font-weight:normal;">Q</span>
<div class="a" style="left:0.00px;top:134.00px;width:1024.00px;height:371.00px;background:#fff;"></div>
<div class="a" style="left:0.00px;top:134.00px;width:13.10px;height:367.00px;background:#f0f0f0;"></div>
<div class="a" style="left:13.10px;top:134.00px;width:0.80px;height:367.00px;background:#d0d0d0;"></div>
<div class="a" style="left:0.00px;top:158.80px;width:13.10px;height:0.80px;background:#d6d6d6;"></div>
<span id="t67" class="t" style="left:0.00px;top:150px;font-size:8.70px;color:#3a3a3a;font-weight:normal;">1</span>
<div class="a" style="left:0.00px;top:163.10px;width:13.10px;height:0.80px;background:#d6d6d6;"></div>
<div class="a" style="left:0.00px;top:174.80px;width:13.10px;height:0.80px;background:#d6d6d6;"></div>
<span id="t68" class="t" style="left:0.00px;top:166px;font-size:8.70px;color:#3a3a3a;font-weight:normal;">3</span>
<div class="a" style="left:0.00px;top:197.10px;width:13.10px;height:0.80px;background:#d6d6d6;"></div>
<span id="t69" class="t" style="left:0.00px;top:188px;font-size:8.70px;color:#3a3a3a;font-weight:normal;">4</span>
<div class="a" style="left:0.00px;top:220.10px;width:13.10px;height:0.80px;background:#d6d6d6;"></div>
<span id="t70" class="t" style="left:0.00px;top:211px;font-size:8.70px;color:#3a3a3a;font-weight:normal;">5</span>
<div class="a" style="left:0.00px;top:243.10px;width:13.10px;height:0.80px;background:#d6d6d6;"></div>
<span id="t71" class="t" style="left:0.00px;top:234px;font-size:8.70px;color:#3a3a3a;font-weight:normal;">6</span>
<div class="a" style="left:0.00px;top:266.10px;width:13.10px;height:0.80px;background:#d6d6d6;"></div>
<span id="t72" class="t" style="left:0.00px;top:257px;font-size:8.70px;color:#3a3a3a;font-weight:normal;">7</span>
<div class="a" style="left:0.00px;top:289.10px;width:13.10px;height:0.80px;background:#d6d6d6;"></div>
<span id="t73" class="t" style="left:0.00px;top:280px;font-size:8.70px;color:#3a3a3a;font-weight:normal;">8</span>
<div class="a" style="left:0.00px;top:312.10px;width:13.10px;height:0.80px;background:#d6d6d6;"></div>
<span id="t74" class="t" style="left:0.00px;top:303px;font-size:8.70px;color:#3a3a3a;font-weight:normal;">9</span>
<div class="a" style="left:0.00px;top:335.10px;width:13.10px;height:0.80px;background:#d6d6d6;"></div>
<span id="t75" class="t" style="left:0.00px;top:326px;font-size:8.70px;color:#3a3a3a;font-weight:normal;">10</span>
<div class="a" style="left:0.00px;top:358.10px;width:13.10px;height:0.80px;background:#d6d6d6;"></div>
<span id="t76" class="t" style="left:0.00px;top:349px;font-size:8.70px;color:#3a3a3a;font-weight:normal;">11</span>
<div class="a" style="left:0.00px;top:381.10px;width:13.10px;height:0.80px;background:#d6d6d6;"></div>
<span id="t77" class="t" style="left:0.00px;top:372px;font-size:8.70px;color:#3a3a3a;font-weight:normal;">12</span>
<div class="a" style="left:0.00px;top:404.10px;width:13.10px;height:0.80px;background:#d6d6d6;"></div>
<span id="t78" class="t" style="left:0.00px;top:395px;font-size:8.70px;color:#3a3a3a;font-weight:normal;">13</span>
<div class="a" style="left:0.00px;top:427.10px;width:13.10px;height:0.80px;background:#d6d6d6;"></div>
<span id="t79" class="t" style="left:0.00px;top:418px;font-size:8.70px;color:#3a3a3a;font-weight:normal;">14</span>
<div class="a" style="left:0.00px;top:450.10px;width:13.10px;height:0.80px;background:#d6d6d6;"></div>
<span id="t80" class="t" style="left:0.00px;top:441px;font-size:8.70px;color:#3a3a3a;font-weight:normal;">15</span>
<div class="a" style="left:0.00px;top:473.10px;width:13.10px;height:0.80px;background:#d6d6d6;"></div>
<span id="t81" class="t" style="left:0.00px;top:464px;font-size:8.70px;color:#3a3a3a;font-weight:normal;">16</span>
<div class="a" style="left:0.00px;top:496.10px;width:13.10px;height:0.80px;background:#d6d6d6;"></div>
<span id="t82" class="t" style="left:0.00px;top:487px;font-size:8.70px;color:#3a3a3a;font-weight:normal;">17</span>
<div class="a" style="left:0.00px;top:519.10px;width:13.10px;height:0.80px;background:#d6d6d6;"></div>
<div class="a" style="left:0.00px;top:158.20px;width:13.10px;height:5.00px;background:#f0f0f0;"></div>
<div class="a" style="left:2.50px;top:160.20px;width:6.00px;height:1.00px;background:#777;"></div>
<div class="a" style="left:0.00px;top:159.00px;width:13.10px;height:0.80px;background:#d0d0d0;"></div>
<div class="a" style="left:0.00px;top:163.10px;width:13.10px;height:0.80px;background:#d0d0d0;"></div>
<div class="a" style="left:13.90px;top:134.00px;width:1024.00px;height:29.50px;background:#595959;"></div>
<div class="a" style="left:13.90px;top:134.00px;width:84.85px;height:367.00px;background:#595959;"></div>
<div class="a" style="left:0.00px;top:197.50px;width:1024.00px;height:1.00px;background:#c8c8c8;"></div>
<div class="a" style="left:13.90px;top:197.50px;width:84.85px;height:1.00px;background:#6c6c6c;"></div>
<svg class="a" style="left:14px;top:135px;" width="60" height="60" viewBox="0 0 60 60">
<rect x="2" y="2" width="35.5" height="44.5" fill="#a6def2" stroke="#1e1e1e" stroke-width="1.4"/>
<rect x="7" y="6.8" width="35.6" height="44.8" fill="#9ff2dd" stroke="#1e1e1e" stroke-width="1.4"/>
<rect x="10.6" y="10.7" width="28.5" height="6.5" rx="1" fill="#a6def2" stroke="#1e1e1e" stroke-width="1.2"/>
<path d="M10.6 20.9h3M15.5 20.9h17M10.6 24.4h3M15.5 24.4h15M10.6 28h3M15.5 28h14" stroke="#1e1e1e" stroke-width="1.1"/>
<path d="M11 39.4L28 31.2" stroke="#1e1e1e" stroke-width="1.1"/><path d="M24.5 30.5l4 .5-1.8 3.5" fill="none" stroke="#1e1e1e" stroke-width="1.1"/>
<rect x="11" y="43" width="3" height="4.5" fill="#e8907a" stroke="#1e1e1e" stroke-width="0.8"/>
<rect x="17.5" y="40.5" width="3" height="7" fill="#f2d048" stroke="#1e1e1e" stroke-width="0.8"/>
<rect x="23.5" y="38.5" width="3" height="9" fill="#e2a548" stroke="#1e1e1e" stroke-width="0.8"/>
<rect x="29.5" y="34.5" width="3" height="13" fill="#3cc878" stroke="#1e1e1e" stroke-width="0.8"/>
<circle cx="42.3" cy="29" r="8.8" fill="#f7dc1c" stroke="#1e1e1e" stroke-width="1.5"/>
<text x="42.4" y="33.8" font-size="13" font-weight="bold" text-anchor="middle" fill="#1e1e1e" font-family="Liberation Sans">$</text>
</svg>
<div class="a" style="left:13.90px;top:199.20px;width:84.50px;height:30.40px;background:#7cf8c6;"></div>
<span id="t83" class="t" style="left:18.50px;top:212px;font-size:8.20px;color:#1d3a2a;font-weight:bold;-webkit-text-stroke:0.15px currentColor;">PLANO DE CONTAS</span>
<span id="t84" class="t" style="left:18.40px;top:246px;font-size:8.20px;color:#f6f6f6;font-weight:bold;-webkit-text-stroke:0.12px currentColor;">LANÇAMENTOS</span>
<span id="t85" class="t" style="left:18.40px;top:275px;font-size:8.20px;color:#f6f6f6;font-weight:bold;-webkit-text-stroke:0.12px currentColor;">PLANEJAMENTO</span>
<span id="t86" class="t" style="left:18.40px;top:285px;font-size:8.20px;color:#f6f6f6;font-weight:bold;-webkit-text-stroke:0.12px currentColor;">FINANCEIRO</span>
<span id="t87" class="t" style="left:18.40px;top:314px;font-size:8.20px;color:#f6f6f6;font-weight:bold;-webkit-text-stroke:0.12px currentColor;">RELATÓRIOS GERAIS</span>
<span id="t88" class="t" style="left:18.40px;top:344px;font-size:8.20px;color:#f6f6f6;font-weight:bold;-webkit-text-stroke:0.12px currentColor;">RELATÓRIOS</span>
<span id="t89" class="t" style="left:18.40px;top:354px;font-size:8.20px;color:#f6f6f6;font-weight:bold;-webkit-text-stroke:0.12px currentColor;">ESPECÍFICOS</span>
<span id="t90" class="t" style="left:18.40px;top:383px;font-size:8.20px;color:#f6f6f6;font-weight:bold;-webkit-text-stroke:0.12px currentColor;">DASHBOARDS</span>
<span id="t91" class="t" style="left:18.40px;top:418px;font-size:8.20px;color:#f6f6f6;font-weight:bold;-webkit-text-stroke:0.12px currentColor;">INSTRUÇÕES</span>
<div class="a" style="left:102.10px;top:139.00px;width:60.90px;height:18.10px;background:#7cf8c6;border-radius:3px;"></div>
<span id="t92" class="t" style="left:115.90px;top:146px;font-size:6.90px;color:#1a3526;font-weight:bold;-webkit-text-stroke:0.15px currentColor;">RECEITAS</span>
<div class="a" style="left:166.50px;top:139.00px;width:61.20px;height:18.10px;border:1.3px solid #cfcfcf;border-radius:3.5px;"></div>
<span id="t93" class="t" style="left:179.10px;top:146px;font-size:6.90px;color:#f4f4f4;font-weight:bold;-webkit-text-stroke:0.15px currentColor;">DESPESAS</span>
<div class="a" style="left:229.90px;top:139.00px;width:87.70px;height:18.10px;border:1.3px solid #cfcfcf;border-radius:3.5px;"></div>
<span id="t94" class="t" style="left:237.00px;top:146px;font-size:6.90px;color:#f4f4f4;font-weight:bold;-webkit-text-stroke:0.15px currentColor;">CENTROS DE CUSTOS</span>
<div class="a" style="left:319.90px;top:139.00px;width:62.70px;height:18.10px;border:1.3px solid #cfcfcf;border-radius:3.5px;"></div>
<span id="t95" class="t" style="left:336.60px;top:146px;font-size:6.90px;color:#f4f4f4;font-weight:bold;-webkit-text-stroke:0.15px currentColor;">BANCOS</span>
<div class="a" style="left:385.10px;top:139.00px;width:111.90px;height:18.10px;border:1.3px solid #cfcfcf;border-radius:3.5px;"></div>
<span id="t96" class="t" style="left:392.60px;top:146px;font-size:6.90px;color:#f4f4f4;font-weight:bold;-webkit-text-stroke:0.15px currentColor;">CLIENTES / FORNECEDORES</span>
<div class="a" style="left:499.00px;top:139.00px;width:84.40px;height:18.10px;border:1.3px solid #cfcfcf;border-radius:3.5px;"></div>
<span id="t97" class="t" style="left:509.90px;top:146px;font-size:6.90px;color:#f4f4f4;font-weight:bold;-webkit-text-stroke:0.15px currentColor;">TRANSFERÊNCIAS</span>
<span id="t98" class="t" style="left:145.10px;top:165px;font-size:8.50px;color:#2e2e2e;font-weight:normal;font-style:italic;">*Cadastre as suas receitas</span>
<div class="a" style="left:105.50px;top:175.30px;width:165.90px;height:22.30px;background:#385723;"></div>
<div class="a" style="left:142.00px;top:175.30px;width:0.90px;height:22.30px;background:#9fb48f;"></div>
<span id="t99" class="t" style="left:114.20px;top:183px;font-size:7.50px;color:#f4f4f4;font-weight:bold;-webkit-text-stroke:0.12px currentColor;">1.1</span>
<span id="t100" class="t" style="left:151.40px;top:183px;font-size:7.50px;color:#f4f4f4;font-weight:bold;-webkit-text-stroke:0.12px currentColor;">RECEITA COM PRODUTOS</span>
<div class="a" style="left:105.50px;top:198.00px;width:37.00px;height:303.50px;background:#f2f2f2;"></div>
<div class="a" style="left:105.20px;top:198.00px;width:0.90px;height:303.50px;background:#e4e4e4;"></div>
<div class="a" style="left:142.10px;top:198.00px;width:0.90px;height:303.50px;background:#ececec;"></div>
<div class="a" style="left:270.90px;top:198.00px;width:0.90px;height:303.50px;background:#e0e0e0;"></div>
<div class="a" style="left:105.50px;top:220.00px;width:165.90px;height:1.00px;background:#e2e2e2;"></div>
<span id="t101" class="t" style="left:114.80px;top:207px;font-size:8.20px;color:#a8a8a8;font-weight:normal;-webkit-text-stroke:0.1px currentColor;">1.1.1</span>
<span id="t102" class="t" style="left:151.40px;top:206px;font-size:8.60px;color:#222;font-weight:normal;-webkit-text-stroke:0.3px currentColor;">Apostila Financeira</span>
<div class="a" style="left:105.50px;top:243.00px;width:165.90px;height:1.00px;background:#e2e2e2;"></div>
<span id="t103" class="t" style="left:114.80px;top:230px;font-size:8.20px;color:#a8a8a8;font-weight:normal;-webkit-text-stroke:0.1px currentColor;">1.1.2</span>
<span id="t104" class="t" style="left:151.40px;top:229px;font-size:8.60px;color:#222;font-weight:normal;-webkit-text-stroke:0.3px currentColor;">Apostila de Estratégia</span>
<div class="a" style="left:105.50px;top:266.00px;width:165.90px;height:1.00px;background:#e2e2e2;"></div>
<span id="t105" class="t" style="left:114.80px;top:253px;font-size:8.20px;color:#a8a8a8;font-weight:normal;-webkit-text-stroke:0.1px currentColor;">1.1.3</span>
<span id="t106" class="t" style="left:151.40px;top:252px;font-size:8.60px;color:#222;font-weight:normal;-webkit-text-stroke:0.3px currentColor;">Apostila de Marketing</span>
<div class="a" style="left:105.50px;top:289.00px;width:165.90px;height:1.00px;background:#e2e2e2;"></div>
<span id="t107" class="t" style="left:114.80px;top:276px;font-size:8.20px;color:#a8a8a8;font-weight:normal;-webkit-text-stroke:0.1px currentColor;">1.1.4</span>
<span id="t108" class="t" style="left:151.40px;top:275px;font-size:8.60px;color:#222;font-weight:normal;-webkit-text-stroke:0.3px currentColor;">Apostila de Gestão de Pessoas</span>
<div class="a" style="left:105.50px;top:312.00px;width:165.90px;height:1.00px;background:#e2e2e2;"></div>
<span id="t109" class="t" style="left:114.80px;top:299px;font-size:8.20px;color:#a8a8a8;font-weight:normal;-webkit-text-stroke:0.1px currentColor;">1.1.5</span>
<span id="t110" class="t" style="left:151.40px;top:298px;font-size:8.60px;color:#222;font-weight:normal;-webkit-text-stroke:0.3px currentColor;">Apostila de Qualidade</span>
<div class="a" style="left:105.50px;top:335.00px;width:165.90px;height:1.00px;background:#e2e2e2;"></div>
<span id="t111" class="t" style="left:114.80px;top:322px;font-size:8.20px;color:#a8a8a8;font-weight:normal;-webkit-text-stroke:0.1px currentColor;">1.1.6</span>
<div class="a" style="left:152.00px;top:324.00px;width:2.00px;height:2.00px;background:#8a8a8a;"></div>
<div class="a" style="left:105.50px;top:358.00px;width:165.90px;height:1.00px;background:#e2e2e2;"></div>
<span id="t112" class="t" style="left:114.80px;top:345px;font-size:8.20px;color:#a8a8a8;font-weight:normal;-webkit-text-stroke:0.1px currentColor;">1.1.7</span>
<div class="a" style="left:152.00px;top:347.00px;width:2.00px;height:2.00px;background:#8a8a8a;"></div>
<div class="a" style="left:105.50px;top:381.00px;width:165.90px;height:1.00px;background:#e2e2e2;"></div>
<span id="t113" class="t" style="left:114.80px;top:368px;font-size:8.20px;color:#a8a8a8;font-weight:normal;-webkit-text-stroke:0.1px currentColor;">1.1.8</span>
<div class="a" style="left:152.00px;top:370.00px;width:2.00px;height:2.00px;background:#8a8a8a;"></div>
<div class="a" style="left:105.50px;top:404.00px;width:165.90px;height:1.00px;background:#e2e2e2;"></div>
<span id="t114" class="t" style="left:114.80px;top:391px;font-size:8.20px;color:#a8a8a8;font-weight:normal;-webkit-text-stroke:0.1px currentColor;">1.1.9</span>
<div class="a" style="left:152.00px;top:393.00px;width:2.00px;height:2.00px;background:#8a8a8a;"></div>
<div class="a" style="left:105.50px;top:427.00px;width:165.90px;height:1.00px;background:#e2e2e2;"></div>
<span id="t115" class="t" style="left:114.80px;top:414px;font-size:8.20px;color:#a8a8a8;font-weight:normal;-webkit-text-stroke:0.1px currentColor;">1.1.10</span>
<div class="a" style="left:152.00px;top:416.00px;width:2.00px;height:2.00px;background:#8a8a8a;"></div>
<div class="a" style="left:105.50px;top:450.00px;width:165.90px;height:1.00px;background:#e2e2e2;"></div>
<span id="t116" class="t" style="left:114.80px;top:437px;font-size:8.20px;color:#a8a8a8;font-weight:normal;-webkit-text-stroke:0.1px currentColor;">1.1.11</span>
<div class="a" style="left:152.00px;top:439.00px;width:2.00px;height:2.00px;background:#8a8a8a;"></div>
<div class="a" style="left:105.50px;top:473.00px;width:165.90px;height:1.00px;background:#e2e2e2;"></div>
<span id="t117" class="t" style="left:114.80px;top:460px;font-size:8.20px;color:#a8a8a8;font-weight:normal;-webkit-text-stroke:0.1px currentColor;">1.1.12</span>
<div class="a" style="left:152.00px;top:462.00px;width:2.00px;height:2.00px;background:#8a8a8a;"></div>
<div class="a" style="left:105.50px;top:496.00px;width:165.90px;height:1.00px;background:#e2e2e2;"></div>
<span id="t118" class="t" style="left:114.80px;top:483px;font-size:8.20px;color:#a8a8a8;font-weight:normal;-webkit-text-stroke:0.1px currentColor;">1.1.13</span>
<div class="a" style="left:152.00px;top:485.00px;width:2.00px;height:2.00px;background:#8a8a8a;"></div>
<div class="a" style="left:105.50px;top:519.00px;width:165.90px;height:1.00px;background:#e2e2e2;"></div>
<div class="a" style="left:288.40px;top:175.30px;width:167.10px;height:22.30px;background:#385723;"></div>
<div class="a" style="left:326.00px;top:175.30px;width:0.90px;height:22.30px;background:#9fb48f;"></div>
<span id="t119" class="t" style="left:297.10px;top:183px;font-size:7.50px;color:#f4f4f4;font-weight:bold;-webkit-text-stroke:0.12px currentColor;">1.2</span>
<span id="t120" class="t" style="left:334.90px;top:183px;font-size:7.50px;color:#f4f4f4;font-weight:bold;-webkit-text-stroke:0.12px currentColor;">RECEITA COM SERVIÇOS</span>
<div class="a" style="left:288.40px;top:198.00px;width:38.10px;height:303.50px;background:#f2f2f2;"></div>
<div class="a" style="left:288.10px;top:198.00px;width:0.90px;height:303.50px;background:#e4e4e4;"></div>
<div class="a" style="left:326.10px;top:198.00px;width:0.90px;height:303.50px;background:#ececec;"></div>
<div class="a" style="left:455.00px;top:198.00px;width:0.90px;height:303.50px;background:#e0e0e0;"></div>
<div class="a" style="left:288.40px;top:220.00px;width:167.10px;height:1.00px;background:#e2e2e2;"></div>
<span id="t121" class="t" style="left:297.70px;top:207px;font-size:8.20px;color:#a8a8a8;font-weight:normal;-webkit-text-stroke:0.1px currentColor;">1.2.1</span>
<span id="t122" class="t" style="left:334.90px;top:206px;font-size:8.60px;color:#222;font-weight:normal;-webkit-text-stroke:0.3px currentColor;">Consultoria Financeira</span>
<div class="a" style="left:288.40px;top:243.00px;width:167.10px;height:1.00px;background:#e2e2e2;"></div>
<span id="t123" class="t" style="left:297.70px;top:230px;font-size:8.20px;color:#a8a8a8;font-weight:normal;-webkit-text-stroke:0.1px currentColor;">1.2.2</span>
<span id="t124" class="t" style="left:334.90px;top:229px;font-size:8.60px;color:#222;font-weight:normal;-webkit-text-stroke:0.3px currentColor;">Consultoria Estratégica</span>
<div class="a" style="left:288.40px;top:266.00px;width:167.10px;height:1.00px;background:#e2e2e2;"></div>
<span id="t125" class="t" style="left:297.70px;top:253px;font-size:8.20px;color:#a8a8a8;font-weight:normal;-webkit-text-stroke:0.1px currentColor;">1.2.3</span>
<span id="t126" class="t" style="left:334.90px;top:252px;font-size:8.60px;color:#222;font-weight:normal;-webkit-text-stroke:0.3px currentColor;">Consultoria de Marketing</span>
<div class="a" style="left:288.40px;top:289.00px;width:167.10px;height:1.00px;background:#e2e2e2;"></div>
<span id="t127" class="t" style="left:297.70px;top:276px;font-size:8.20px;color:#a8a8a8;font-weight:normal;-webkit-text-stroke:0.1px currentColor;">1.2.4</span>
<span id="t128" class="t" style="left:334.90px;top:275px;font-size:8.60px;color:#222;font-weight:normal;-webkit-text-stroke:0.3px currentColor;">Consultoria de Gestão de Pessoas</span>
<div class="a" style="left:288.40px;top:312.00px;width:167.10px;height:1.00px;background:#e2e2e2;"></div>
<span id="t129" class="t" style="left:297.70px;top:299px;font-size:8.20px;color:#a8a8a8;font-weight:normal;-webkit-text-stroke:0.1px currentColor;">1.2.5</span>
<span id="t130" class="t" style="left:334.90px;top:298px;font-size:8.60px;color:#222;font-weight:normal;-webkit-text-stroke:0.3px currentColor;">Consultoria de Qualidade</span>
<div class="a" style="left:288.40px;top:335.00px;width:167.10px;height:1.00px;background:#e2e2e2;"></div>
<span id="t131" class="t" style="left:297.70px;top:322px;font-size:8.20px;color:#a8a8a8;font-weight:normal;-webkit-text-stroke:0.1px currentColor;">1.2.6</span>
<div class="a" style="left:336.00px;top:324.00px;width:2.00px;height:2.00px;background:#8a8a8a;"></div>
<div class="a" style="left:288.40px;top:358.00px;width:167.10px;height:1.00px;background:#e2e2e2;"></div>
<span id="t132" class="t" style="left:297.70px;top:345px;font-size:8.20px;color:#a8a8a8;font-weight:normal;-webkit-text-stroke:0.1px currentColor;">1.2.7</span>
<div class="a" style="left:336.00px;top:347.00px;width:2.00px;height:2.00px;background:#8a8a8a;"></div>
<div class="a" style="left:288.40px;top:381.00px;width:167.10px;height:1.00px;background:#e2e2e2;"></div>
<span id="t133" class="t" style="left:297.70px;top:368px;font-size:8.20px;color:#a8a8a8;font-weight:normal;-webkit-text-stroke:0.1px currentColor;">1.2.8</span>
<div class="a" style="left:336.00px;top:370.00px;width:2.00px;height:2.00px;background:#8a8a8a;"></div>
<div class="a" style="left:288.40px;top:404.00px;width:167.10px;height:1.00px;background:#e2e2e2;"></div>
<span id="t134" class="t" style="left:297.70px;top:391px;font-size:8.20px;color:#a8a8a8;font-weight:normal;-webkit-text-stroke:0.1px currentColor;">1.2.9</span>
<div class="a" style="left:336.00px;top:393.00px;width:2.00px;height:2.00px;background:#8a8a8a;"></div>
<div class="a" style="left:288.40px;top:427.00px;width:167.10px;height:1.00px;background:#e2e2e2;"></div>
<span id="t135" class="t" style="left:297.70px;top:414px;font-size:8.20px;color:#a8a8a8;font-weight:normal;-webkit-text-stroke:0.1px currentColor;">1.2.10</span>
<div class="a" style="left:336.00px;top:416.00px;width:2.00px;height:2.00px;background:#8a8a8a;"></div>
<div class="a" style="left:288.40px;top:450.00px;width:167.10px;height:1.00px;background:#e2e2e2;"></div>
<span id="t136" class="t" style="left:297.70px;top:437px;font-size:8.20px;color:#a8a8a8;font-weight:normal;-webkit-text-stroke:0.1px currentColor;">1.2.11</span>
<div class="a" style="left:336.00px;top:439.00px;width:2.00px;height:2.00px;background:#8a8a8a;"></div>
<div class="a" style="left:288.40px;top:473.00px;width:167.10px;height:1.00px;background:#e2e2e2;"></div>
<span id="t137" class="t" style="left:297.70px;top:460px;font-size:8.20px;color:#a8a8a8;font-weight:normal;-webkit-text-stroke:0.1px currentColor;">1.2.12</span>
<div class="a" style="left:336.00px;top:462.00px;width:2.00px;height:2.00px;background:#8a8a8a;"></div>
<div class="a" style="left:288.40px;top:496.00px;width:167.10px;height:1.00px;background:#e2e2e2;"></div>
<span id="t138" class="t" style="left:297.70px;top:483px;font-size:8.20px;color:#a8a8a8;font-weight:normal;-webkit-text-stroke:0.1px currentColor;">1.2.13</span>
<div class="a" style="left:336.00px;top:485.00px;width:2.00px;height:2.00px;background:#8a8a8a;"></div>
<div class="a" style="left:288.40px;top:519.00px;width:167.10px;height:1.00px;background:#e2e2e2;"></div>
<div class="a" style="left:471.50px;top:175.30px;width:166.90px;height:22.30px;background:#385723;"></div>
<div class="a" style="left:509.10px;top:175.30px;width:0.90px;height:22.30px;background:#9fb48f;"></div>
<span id="t139" class="t" style="left:480.20px;top:183px;font-size:7.50px;color:#f4f4f4;font-weight:bold;-webkit-text-stroke:0.12px currentColor;">1.3</span>
<span id="t140" class="t" style="left:518.10px;top:183px;font-size:7.50px;color:#f4f4f4;font-weight:bold;-webkit-text-stroke:0.12px currentColor;">OUTRA RECEITA</span>
<div class="a" style="left:471.50px;top:198.00px;width:38.10px;height:303.50px;background:#f2f2f2;"></div>
<div class="a" style="left:471.20px;top:198.00px;width:0.90px;height:303.50px;background:#e4e4e4;"></div>
<div class="a" style="left:509.20px;top:198.00px;width:0.90px;height:303.50px;background:#ececec;"></div>
<div class="a" style="left:637.90px;top:198.00px;width:0.90px;height:303.50px;background:#e0e0e0;"></div>
<div class="a" style="left:471.50px;top:220.00px;width:166.90px;height:1.00px;background:#e2e2e2;"></div>
<span id="t141" class="t" style="left:480.80px;top:207px;font-size:8.20px;color:#a8a8a8;font-weight:normal;-webkit-text-stroke:0.1px currentColor;">1.3.1</span>
<span id="t142" class="t" style="left:518.10px;top:206px;font-size:8.60px;color:#222;font-weight:normal;-webkit-text-stroke:0.3px currentColor;">Cursos in Company</span>
<div class="a" style="left:471.50px;top:243.00px;width:166.90px;height:1.00px;background:#e2e2e2;"></div>
<span id="t143" class="t" style="left:480.80px;top:230px;font-size:8.20px;color:#a8a8a8;font-weight:normal;-webkit-text-stroke:0.1px currentColor;">1.3.2</span>
<span id="t144" class="t" style="left:518.10px;top:229px;font-size:8.60px;color:#222;font-weight:normal;-webkit-text-stroke:0.3px currentColor;">Cursos Online</span>
<div class="a" style="left:471.50px;top:266.00px;width:166.90px;height:1.00px;background:#e2e2e2;"></div>
<span id="t145" class="t" style="left:480.80px;top:253px;font-size:8.20px;color:#a8a8a8;font-weight:normal;-webkit-text-stroke:0.1px currentColor;">1.3.3</span>
<span id="t146" class="t" style="left:518.10px;top:252px;font-size:8.60px;color:#222;font-weight:normal;-webkit-text-stroke:0.3px currentColor;">Palestras</span>
<div class="a" style="left:471.50px;top:289.00px;width:166.90px;height:1.00px;background:#e2e2e2;"></div>
<span id="t147" class="t" style="left:480.80px;top:276px;font-size:8.20px;color:#a8a8a8;font-weight:normal;-webkit-text-stroke:0.1px currentColor;">1.3.4</span>
<span id="t148" class="t" style="left:518.10px;top:275px;font-size:8.60px;color:#222;font-weight:normal;-webkit-text-stroke:0.3px currentColor;">Apresentações</span>
<div class="a" style="left:471.50px;top:312.00px;width:166.90px;height:1.00px;background:#e2e2e2;"></div>
<span id="t149" class="t" style="left:480.80px;top:299px;font-size:8.20px;color:#a8a8a8;font-weight:normal;-webkit-text-stroke:0.1px currentColor;">1.3.5</span>
<span id="t150" class="t" style="left:518.10px;top:298px;font-size:8.60px;color:#222;font-weight:normal;-webkit-text-stroke:0.3px currentColor;">Coaching</span>
<div class="a" style="left:471.50px;top:335.00px;width:166.90px;height:1.00px;background:#e2e2e2;"></div>
<span id="t151" class="t" style="left:480.80px;top:322px;font-size:8.20px;color:#a8a8a8;font-weight:normal;-webkit-text-stroke:0.1px currentColor;">1.3.6</span>
<div class="a" style="left:519.00px;top:324.00px;width:2.00px;height:2.00px;background:#8a8a8a;"></div>
<div class="a" style="left:471.50px;top:358.00px;width:166.90px;height:1.00px;background:#e2e2e2;"></div>
<span id="t152" class="t" style="left:480.80px;top:345px;font-size:8.20px;color:#a8a8a8;font-weight:normal;-webkit-text-stroke:0.1px currentColor;">1.3.7</span>
<div class="a" style="left:519.00px;top:347.00px;width:2.00px;height:2.00px;background:#8a8a8a;"></div>
<div class="a" style="left:471.50px;top:381.00px;width:166.90px;height:1.00px;background:#e2e2e2;"></div>
<span id="t153" class="t" style="left:480.80px;top:368px;font-size:8.20px;color:#a8a8a8;font-weight:normal;-webkit-text-stroke:0.1px currentColor;">1.3.8</span>
<div class="a" style="left:519.00px;top:370.00px;width:2.00px;height:2.00px;background:#8a8a8a;"></div>
<div class="a" style="left:471.50px;top:404.00px;width:166.90px;height:1.00px;background:#e2e2e2;"></div>
<span id="t154" class="t" style="left:480.80px;top:391px;font-size:8.20px;color:#a8a8a8;font-weight:normal;-webkit-text-stroke:0.1px currentColor;">1.3.9</span>
<div class="a" style="left:519.00px;top:393.00px;width:2.00px;height:2.00px;background:#8a8a8a;"></div>
<div class="a" style="left:471.50px;top:427.00px;width:166.90px;height:1.00px;background:#e2e2e2;"></div>
<span id="t155" class="t" style="left:480.80px;top:414px;font-size:8.20px;color:#a8a8a8;font-weight:normal;-webkit-text-stroke:0.1px currentColor;">1.3.10</span>
<div class="a" style="left:519.00px;top:416.00px;width:2.00px;height:2.00px;background:#8a8a8a;"></div>
<div class="a" style="left:471.50px;top:450.00px;width:166.90px;height:1.00px;background:#e2e2e2;"></div>
<span id="t156" class="t" style="left:480.80px;top:437px;font-size:8.20px;color:#a8a8a8;font-weight:normal;-webkit-text-stroke:0.1px currentColor;">1.3.11</span>
<div class="a" style="left:519.00px;top:439.00px;width:2.00px;height:2.00px;background:#8a8a8a;"></div>
<div class="a" style="left:471.50px;top:473.00px;width:166.90px;height:1.00px;background:#e2e2e2;"></div>
<span id="t157" class="t" style="left:480.80px;top:460px;font-size:8.20px;color:#a8a8a8;font-weight:normal;-webkit-text-stroke:0.1px currentColor;">1.3.12</span>
<div class="a" style="left:519.00px;top:462.00px;width:2.00px;height:2.00px;background:#8a8a8a;"></div>
<div class="a" style="left:471.50px;top:496.00px;width:166.90px;height:1.00px;background:#e2e2e2;"></div>
<span id="t158" class="t" style="left:480.80px;top:483px;font-size:8.20px;color:#a8a8a8;font-weight:normal;-webkit-text-stroke:0.1px currentColor;">1.3.13</span>
<div class="a" style="left:519.00px;top:485.00px;width:2.00px;height:2.00px;background:#8a8a8a;"></div>
<div class="a" style="left:471.50px;top:519.00px;width:166.90px;height:1.00px;background:#e2e2e2;"></div>
<div class="a" style="left:655.40px;top:175.30px;width:166.50px;height:22.30px;background:#385723;"></div>
<div class="a" style="left:691.70px;top:175.30px;width:0.90px;height:22.30px;background:#9fb48f;"></div>
<span id="t159" class="t" style="left:664.10px;top:183px;font-size:7.50px;color:#f4f4f4;font-weight:bold;-webkit-text-stroke:0.12px currentColor;">1.4</span>
<span id="t160" class="t" style="left:701.40px;top:183px;font-size:7.50px;color:#f4f4f4;font-weight:bold;-webkit-text-stroke:0.12px currentColor;">RECEITA FINANCEIRA</span>
<div class="a" style="left:655.40px;top:198.00px;width:36.80px;height:303.50px;background:#f2f2f2;"></div>
<div class="a" style="left:655.10px;top:198.00px;width:0.90px;height:303.50px;background:#e4e4e4;"></div>
<div class="a" style="left:691.80px;top:198.00px;width:0.90px;height:303.50px;background:#ececec;"></div>
<div class="a" style="left:821.40px;top:198.00px;width:0.90px;height:303.50px;background:#e0e0e0;"></div>
<div class="a" style="left:655.40px;top:220.00px;width:166.50px;height:1.00px;background:#e2e2e2;"></div>
<span id="t161" class="t" style="left:664.70px;top:207px;font-size:8.20px;color:#a8a8a8;font-weight:normal;-webkit-text-stroke:0.1px currentColor;">1.4.1</span>
<span id="t162" class="t" style="left:701.40px;top:206px;font-size:8.60px;color:#222;font-weight:normal;-webkit-text-stroke:0.3px currentColor;">Ações</span>
<div class="a" style="left:655.40px;top:243.00px;width:166.50px;height:1.00px;background:#e2e2e2;"></div>
<span id="t163" class="t" style="left:664.70px;top:230px;font-size:8.20px;color:#a8a8a8;font-weight:normal;-webkit-text-stroke:0.1px currentColor;">1.4.2</span>
<span id="t164" class="t" style="left:701.40px;top:229px;font-size:8.60px;color:#222;font-weight:normal;-webkit-text-stroke:0.3px currentColor;">CDB</span>
<div class="a" style="left:655.40px;top:266.00px;width:166.50px;height:1.00px;background:#e2e2e2;"></div>
<span id="t165" class="t" style="left:664.70px;top:253px;font-size:8.20px;color:#a8a8a8;font-weight:normal;-webkit-text-stroke:0.1px currentColor;">1.4.3</span>
<span id="t166" class="t" style="left:701.40px;top:252px;font-size:8.60px;color:#222;font-weight:normal;-webkit-text-stroke:0.3px currentColor;">Tesouro Direto</span>
<div class="a" style="left:655.40px;top:289.00px;width:166.50px;height:1.00px;background:#e2e2e2;"></div>
<span id="t167" class="t" style="left:664.70px;top:276px;font-size:8.20px;color:#a8a8a8;font-weight:normal;-webkit-text-stroke:0.1px currentColor;">1.4.4</span>
<span id="t168" class="t" style="left:701.40px;top:275px;font-size:8.60px;color:#222;font-weight:normal;-webkit-text-stroke:0.3px currentColor;">Poupança</span>
<div class="a" style="left:655.40px;top:312.00px;width:166.50px;height:1.00px;background:#e2e2e2;"></div>
<span id="t169" class="t" style="left:664.70px;top:299px;font-size:8.20px;color:#a8a8a8;font-weight:normal;-webkit-text-stroke:0.1px currentColor;">1.4.5</span>
<span id="t170" class="t" style="left:701.40px;top:298px;font-size:8.60px;color:#222;font-weight:normal;-webkit-text-stroke:0.3px currentColor;">Fundos de Investimento</span>
<div class="a" style="left:655.40px;top:335.00px;width:166.50px;height:1.00px;background:#e2e2e2;"></div>
<span id="t171" class="t" style="left:664.70px;top:322px;font-size:8.20px;color:#a8a8a8;font-weight:normal;-webkit-text-stroke:0.1px currentColor;">1.4.6</span>
<div class="a" style="left:701.00px;top:324.00px;width:2.00px;height:2.00px;background:#8a8a8a;"></div>
<div class="a" style="left:655.40px;top:358.00px;width:166.50px;height:1.00px;background:#e2e2e2;"></div>
<span id="t172" class="t" style="left:664.70px;top:345px;font-size:8.20px;color:#a8a8a8;font-weight:normal;-webkit-text-stroke:0.1px currentColor;">1.4.7</span>
<div class="a" style="left:701.00px;top:347.00px;width:2.00px;height:2.00px;background:#8a8a8a;"></div>
<div class="a" style="left:655.40px;top:381.00px;width:166.50px;height:1.00px;background:#e2e2e2;"></div>
<span id="t173" class="t" style="left:664.70px;top:368px;font-size:8.20px;color:#a8a8a8;font-weight:normal;-webkit-text-stroke:0.1px currentColor;">1.4.8</span>
<div class="a" style="left:701.00px;top:370.00px;width:2.00px;height:2.00px;background:#8a8a8a;"></div>
<div class="a" style="left:655.40px;top:404.00px;width:166.50px;height:1.00px;background:#e2e2e2;"></div>
<span id="t174" class="t" style="left:664.70px;top:391px;font-size:8.20px;color:#a8a8a8;font-weight:normal;-webkit-text-stroke:0.1px currentColor;">1.4.9</span>
<div class="a" style="left:701.00px;top:393.00px;width:2.00px;height:2.00px;background:#8a8a8a;"></div>
<div class="a" style="left:655.40px;top:427.00px;width:166.50px;height:1.00px;background:#e2e2e2;"></div>
<span id="t175" class="t" style="left:664.70px;top:414px;font-size:8.20px;color:#a8a8a8;font-weight:normal;-webkit-text-stroke:0.1px currentColor;">1.4.10</span>
<div class="a" style="left:701.00px;top:416.00px;width:2.00px;height:2.00px;background:#8a8a8a;"></div>
<div class="a" style="left:655.40px;top:450.00px;width:166.50px;height:1.00px;background:#e2e2e2;"></div>
<span id="t176" class="t" style="left:664.70px;top:437px;font-size:8.20px;color:#a8a8a8;font-weight:normal;-webkit-text-stroke:0.1px currentColor;">1.4.11</span>
<div class="a" style="left:701.00px;top:439.00px;width:2.00px;height:2.00px;background:#8a8a8a;"></div>
<div class="a" style="left:655.40px;top:473.00px;width:166.50px;height:1.00px;background:#e2e2e2;"></div>
<span id="t177" class="t" style="left:664.70px;top:460px;font-size:8.20px;color:#a8a8a8;font-weight:normal;-webkit-text-stroke:0.1px currentColor;">1.4.12</span>
<div class="a" style="left:701.00px;top:462.00px;width:2.00px;height:2.00px;background:#8a8a8a;"></div>
<div class="a" style="left:655.40px;top:496.00px;width:166.50px;height:1.00px;background:#e2e2e2;"></div>
<span id="t178" class="t" style="left:664.70px;top:483px;font-size:8.20px;color:#a8a8a8;font-weight:normal;-webkit-text-stroke:0.1px currentColor;">1.4.13</span>
<div class="a" style="left:701.00px;top:485.00px;width:2.00px;height:2.00px;background:#8a8a8a;"></div>
<div class="a" style="left:655.40px;top:519.00px;width:166.50px;height:1.00px;background:#e2e2e2;"></div>
<div class="a" style="left:0.00px;top:501.00px;width:1024.00px;height:5.00px;background:#eeeeee;"></div>
<div class="a" style="left:70.00px;top:501.00px;width:40.00px;height:5.00px;background:#fff;"></div>
</body></html>
